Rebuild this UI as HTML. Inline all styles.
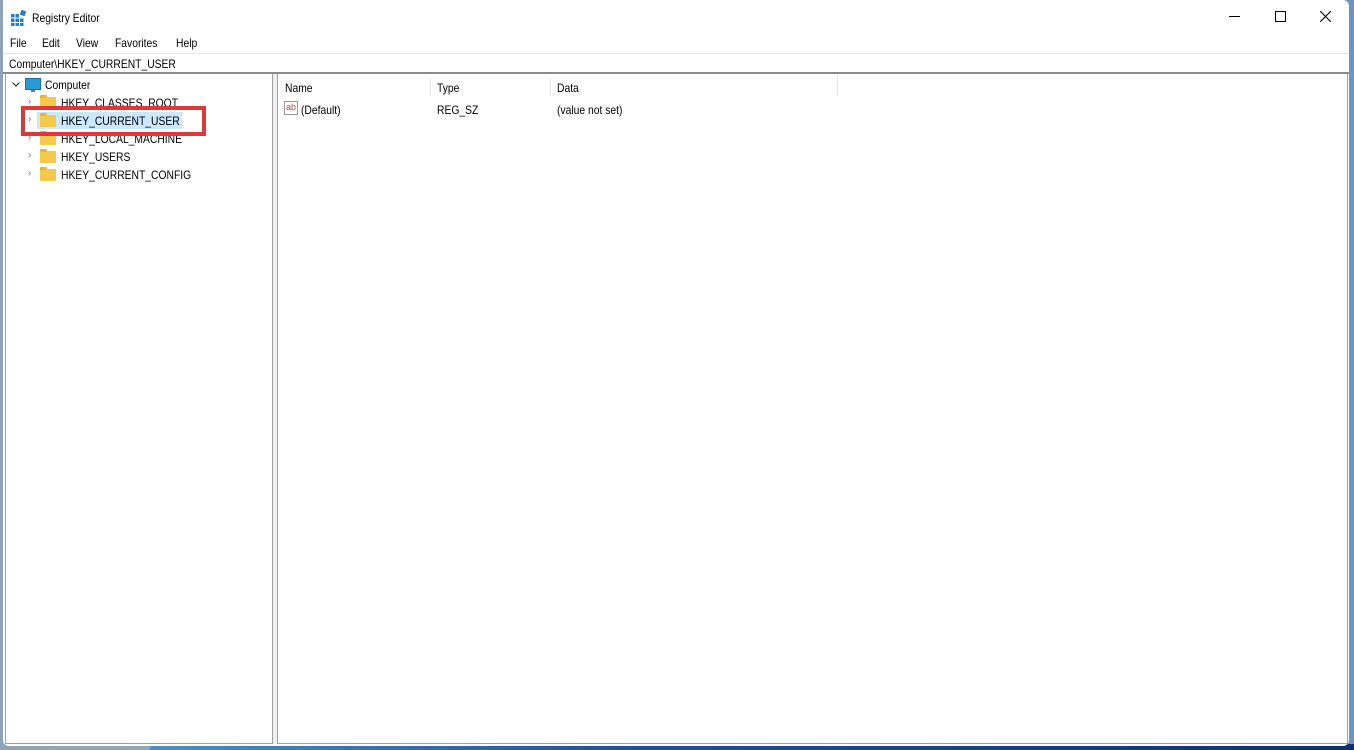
<!DOCTYPE html>
<html><head><style>
*{margin:0;padding:0;box-sizing:border-box}
body{width:1354px;height:750px;overflow:hidden;background:linear-gradient(90deg,#8fa3b8 0%,#9ab0c6 40%,#7fa0c8 70%,#6d94c6 100%);font-family:"Liberation Sans",sans-serif;font-size:12px;color:#000;position:relative}
.win{position:absolute;left:3px;top:0;width:1346px;height:746px;background:#fff;border-radius:0 6px 6px 6px}
.t{position:absolute;white-space:nowrap}
.s{transform:scaleX(0.86);transform-origin:0 0}
.pane{position:absolute;background:#fff;border:1px solid #a0a0a0}
.fold{position:absolute;width:16px;height:12px;background:#f6c94a;border-radius:1px}
.fold:before{content:"";position:absolute;left:0;top:-2px;width:7px;height:3px;background:#e8b43a;border-radius:1px 1px 0 0}
.chev{position:absolute;font-size:10px;color:#777}
</style></head><body>
<div style="position:absolute;left:150px;top:744px;width:1204px;height:6px;background:linear-gradient(90deg,#4b8ec8,#1d4fa8 40%,#0e2f7a)"></div>
<div class="win">
<svg class="t" style="left:8px;top:10px" width="16" height="16" viewBox="0 0 16 16"><g fill="#1e7fd0"><rect x="0" y="4" width="3.5" height="3.5"/><rect x="4.5" y="4" width="3.5" height="3.5"/><rect x="0" y="8.5" width="3.5" height="3.5"/><rect x="4.5" y="8.5" width="3.5" height="3.5"/><rect x="9" y="8.5" width="3.5" height="3.5"/><rect x="0" y="13" width="3.5" height="3"/><rect x="4.5" y="13" width="3.5" height="3"/><rect x="9" y="13" width="3.5" height="3"/><rect x="9.5" y="0.5" width="5" height="5" transform="rotate(20 12 3)"/></g></svg>
<div class="t s" style="left:29px;top:11px">Registry Editor</div>
<div class="t" style="left:1226px;top:16px;width:11px;height:1px;background:#000"></div>
<div class="t" style="left:1272px;top:11px;width:11px;height:11px;border:1px solid #000"></div>
<svg class="t" style="left:1317px;top:11px" width="11" height="11" viewBox="0 0 11 11"><path d="M0 0L11 11M11 0L0 11" stroke="#000" stroke-width="1.1"/></svg>
<div class="t s" style="left:7px;top:36px">File</div>
<div class="t s" style="left:39px;top:36px">Edit</div>
<div class="t s" style="left:73px;top:36px">View</div>
<div class="t s" style="left:112px;top:36px">Favorites</div>
<div class="t s" style="left:173px;top:36px">Help</div>
<div class="t" style="left:0;top:53px;width:1346px;height:1px;background:#e3e3e3"></div>
<div class="t s" style="left:6px;top:57px">Computer\HKEY_CURRENT_USER</div>
<div class="t" style="left:0;top:72px;width:1346px;height:2px;background:#8a8a8a"></div>
<div class="pane" style="left:2px;top:74px;width:268px;height:670px;border-top:none"></div>
<div class="t" style="left:270px;top:74px;width:5px;height:670px;background:#f0f0f0"></div>
<div class="pane" style="left:274px;top:74px;width:1071px;height:670px;border-top:none"></div>
<div class="t" style="left:274px;top:74px;width:561px;height:22px;border-right:1px solid #e5e5e5"></div>
<div class="t" style="left:427px;top:78px;width:1px;height:18px;background:#e5e5e5"></div>
<div class="t" style="left:547px;top:78px;width:1px;height:18px;background:#e5e5e5"></div>
<svg class="t" style="left:9px;top:82px" width="8" height="5" viewBox="0 0 8 5"><path d="M0.5 0.5L4 4L7.5 0.5" fill="none" stroke="#333" stroke-width="1.2"/></svg>
<div class="t" style="left:22px;top:78px;width:16px;height:12px;background:#2a9ad6;border:1px solid #1b6fa8"></div>
<div class="t" style="left:28px;top:90px;width:4px;height:2px;background:#777"></div>
<div class="t s" style="left:42px;top:78px">Computer</div>
<div class="chev" style="left:25px;top:96px">›</div><div class="fold" style="left:37px;top:97px"></div><div class="t s" style="left:58px;top:96px">HKEY_CLASSES_ROOT</div>
<div class="chev" style="left:25px;top:132px">›</div><div class="fold" style="left:37px;top:133px"></div><div class="t s" style="left:58px;top:132px">HKEY_LOCAL_MACHINE</div>
<div class="t" style="left:34px;top:112px;width:145px;height:17px;background:#cce8ff"></div>
<div class="chev" style="left:25px;top:114px">›</div><div class="fold" style="left:37px;top:115px"></div><div class="t s" style="left:58px;top:114px">HKEY_CURRENT_USER</div>
<div class="chev" style="left:25px;top:150px">›</div><div class="fold" style="left:37px;top:151px"></div><div class="t s" style="left:58px;top:150px">HKEY_USERS</div>
<div class="chev" style="left:25px;top:168px">›</div><div class="fold" style="left:37px;top:169px"></div><div class="t s" style="left:58px;top:168px">HKEY_CURRENT_CONFIG</div>
<div class="t" style="left:18px;top:106px;width:185px;height:30px;border:4px solid #dc3a3a"></div>
<div class="t s" style="left:282px;top:81px">Name</div>
<div class="t s" style="left:434px;top:81px">Type</div>
<div class="t s" style="left:554px;top:81px">Data</div>
<div class="t" style="left:281px;top:101px;width:14px;height:14px;border:1px solid #999;font-size:9px;color:#b04a2a;line-height:11px;padding-left:1px">ab</div>
<div class="t s" style="left:298px;top:103px">(Default)</div>
<div class="t s" style="left:434px;top:103px">REG_SZ</div>
<div class="t s" style="left:554px;top:103px">(value not set)</div>
</div>
</body></html>
